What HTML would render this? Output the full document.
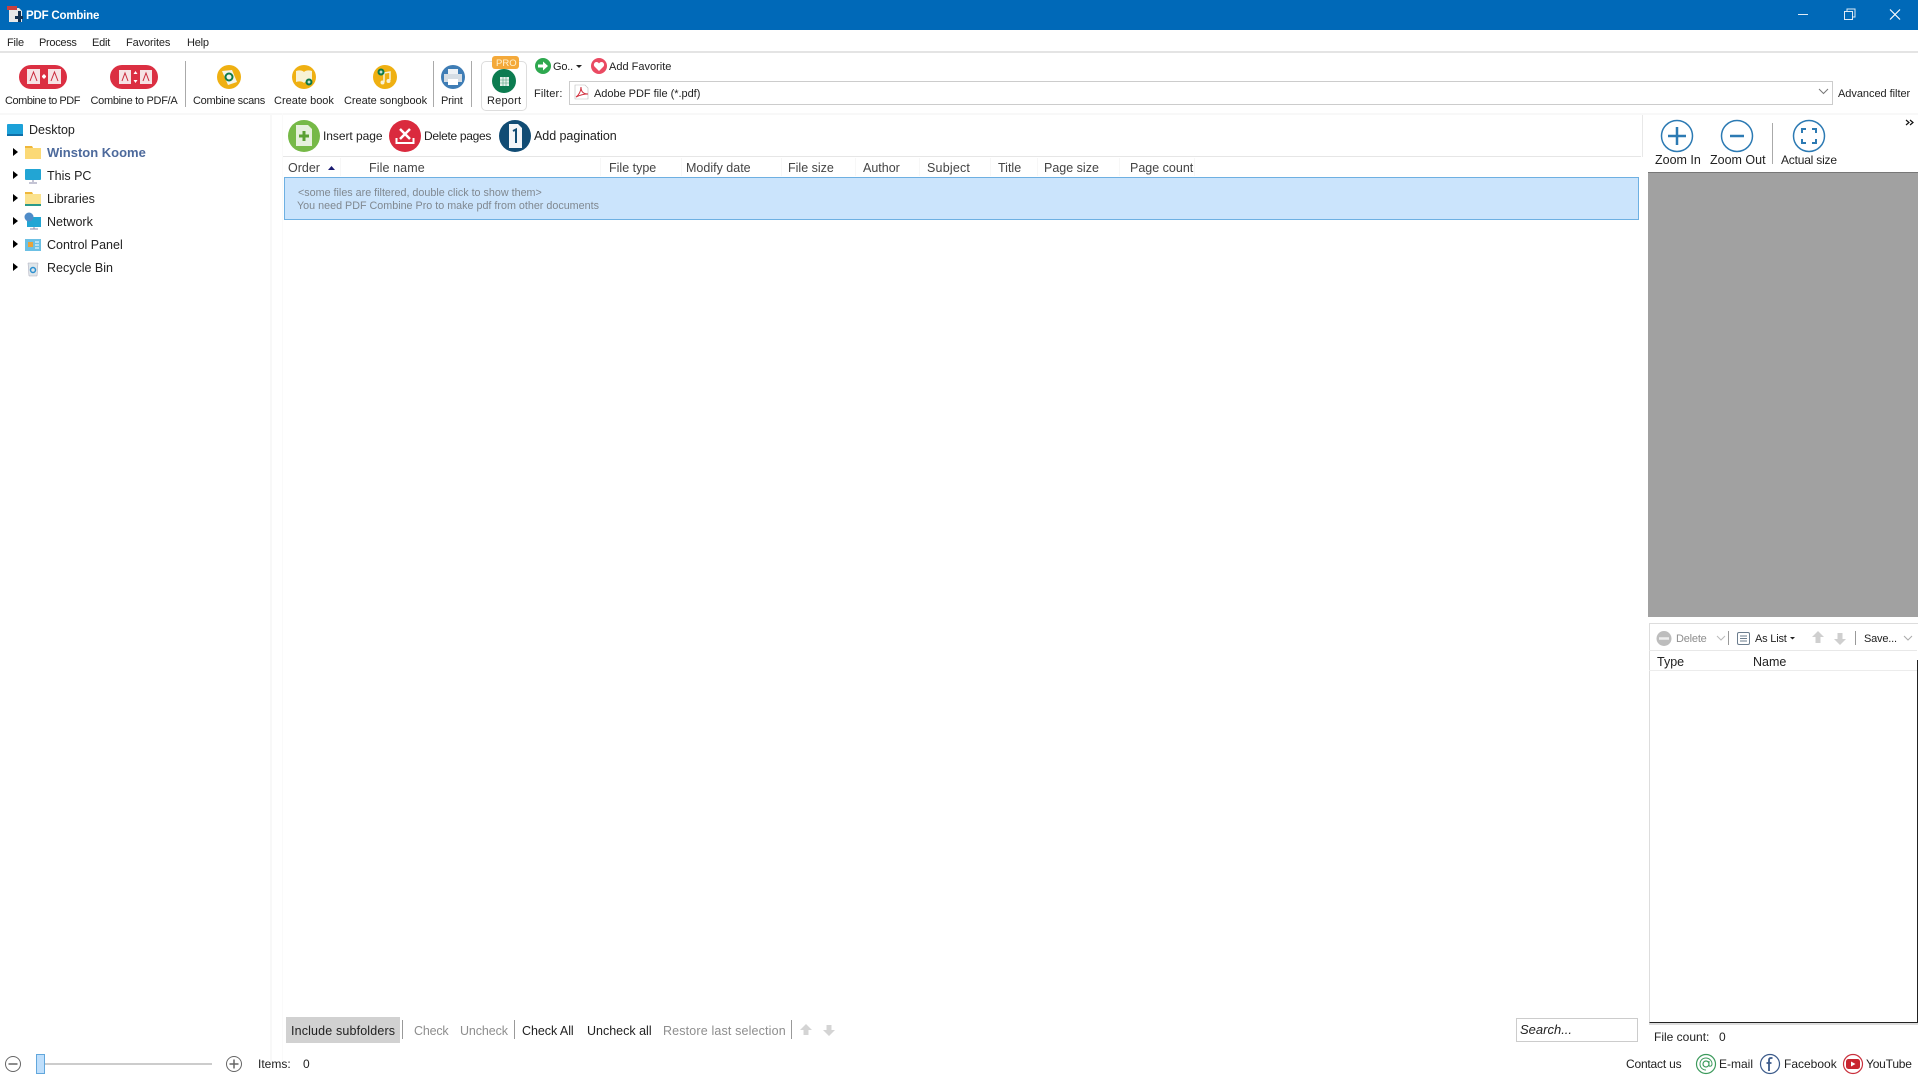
<!DOCTYPE html>
<html><head><meta charset="utf-8"><title>PDF Combine</title>
<style>
html,body{margin:0;padding:0;width:1918px;height:1078px;overflow:hidden;background:#fff}
body{position:relative;font-family:"Liberation Sans",sans-serif;font-size:11px;color:#222}
.t{position:absolute;white-space:nowrap;line-height:14px;letter-spacing:-.2px}
.l{font-size:12.5px;letter-spacing:0}
.m{font-size:12px;letter-spacing:-.1px}
.b{position:absolute}
.g{color:#8e8e8e}
.h{color:#444}
svg{position:absolute;left:0;top:0}
</style></head><body>
<div class="b" style="left:0;top:0;width:1918px;height:30px;background:#0069b8"></div>
<div class="b" style="left:0;top:51px;width:1918px;height:2px;background:#e4e4e4"></div>
<div class="b" style="left:0;top:113px;width:1918px;height:2px;background:#f8f8f8"></div>
<div class="b" style="left:270px;top:113px;width:2px;height:950px;background:#f8f8f8"></div>
<div class="b" style="left:282px;top:113px;width:1px;height:950px;background:#fafafa"></div>
<div class="b" style="left:283px;top:156px;width:1358px;height:1px;background:#e6e6e6"></div>
<div class="b" style="left:284px;top:177px;width:1353px;height:41px;background:#cbe4fc;border:1px solid #6eb0e2"></div>
<div class="b" style="left:1642px;top:115px;width:1px;height:42px;background:#e8e8e8"></div>
<div class="b" style="left:1648px;top:172px;width:270px;height:445px;background:#a1a1a1;border-top:1px solid #777;box-sizing:border-box"></div>
<div class="b" style="left:569px;top:81px;width:1262px;height:22px;border:1px solid #ccc"></div>
<div class="b" style="left:481px;top:61px;width:44px;height:48px;border:1px solid #ddd;border-radius:5px"></div>
<div class="b" style="left:1649px;top:623px;width:268px;height:398px;border-top:1px solid #ddd;border-left:1px solid #ddd;border-right:1px solid #ddd;border-bottom:1px solid #222;box-shadow:0 2px 0 #ddd"></div>
<div class="b" style="left:1917px;top:660px;width:1px;height:362px;background:#222"></div>
<div class="b" style="left:1649px;top:650px;width:268px;height:1px;background:#e8e8e8"></div>
<div class="b" style="left:1649px;top:670px;width:268px;height:1px;background:#ececec"></div>
<div class="b" style="left:286px;top:1017px;width:114px;height:26px;background:#d1d1d1"></div>
<div class="b" style="left:1516px;top:1018px;width:120px;height:22px;border:1px solid #ccc"></div>

<svg width="1918" height="1078" viewBox="0 0 1918 1078" fill="none">
<!-- app icon -->
<path d="M9 8h10l3 3v11H9z" fill="#e8e8e8"/><path d="M7 6h10v4H7z" fill="#c9403f"/><path d="M15 16h3v-5h3v5h2v3h-2v3h-3v-3h-3z" fill="#12304f"/>
<!-- window controls -->
<path d="M1798 14.500h10" stroke="#dfeaf5" stroke-width="1"/>
<path d="M1844.500 11.500h8v8h-8zM1847 11.500v-2.500h8v8h-2.500" stroke="#dfeaf5"/>
<path d="M1890 9.500l10 10M1900 9.500l-10 10" stroke="#fff" stroke-width="1.200"/>
<!-- Combine pills -->
<rect x="19" y="65" width="48" height="24" rx="12" fill="#db2f42"/>
<path d="M27 69h13v15H27zM48 69h13v15H48z" fill="#f6e3e5"/><path d="M30 81l3.500-9 3.500 9M51 81l3.500-9 3.500 9" stroke="#c9283a"/>
<path d="M44 74.500v4M42 76.500h4" stroke="#fff" stroke-width="2"/>
<rect x="110" y="65" width="48" height="24" rx="12" fill="#db2f42"/>
<path d="M119 70h12v14h-12zM140 70h12v14h-12z" fill="#f6e3e5"/><path d="M122 81l3-8 3 8M143 81l3-8 3 8" stroke="#c9283a"/>
<path d="M135.500 71l2 3h-4zM135.500 83l2-3h-4z" fill="#fff"/>
<path d="M185.500 61v46M433.500 61v46M471.500 61v46" stroke="#aaa"/>
<!-- Combine scans -->
<circle cx="229" cy="77" r="12" fill="#efb012"/><path d="M222 71l10-1 5 12-9 3z" fill="#f4f4ea"/><circle cx="229" cy="77" r="3.500" stroke="#0e7a49" stroke-width="2"/>
<!-- book -->
<circle cx="304" cy="77" r="12" fill="#efb012"/><path d="M296 71c3-1 6-1 8 1 2-2 5-2 8-1v11c-3-1-6-1-8 1-2-2-5-2-8-1z" fill="#f8f2d6"/><circle cx="309" cy="82" r="3.500" fill="#0e7a49"/><path d="M307.500 82h3M309 80.500v3" stroke="#fff"/>
<!-- song -->
<circle cx="385" cy="77" r="12" fill="#efb012"/><path d="M384 82v-9l6-1v8" stroke="#f7f2d8" stroke-width="1.500"/><circle cx="382.500" cy="82.500" r="2" fill="#f7f2d8"/><circle cx="388.500" cy="81" r="2" fill="#f7f2d8"/><circle cx="381" cy="72" r="3.500" fill="#0e7a49"/><path d="M379.500 72h3M381 70.500v3" stroke="#fff"/>
<!-- print -->
<circle cx="453" cy="77" r="12" fill="#3f7db5"/><path d="M448 69h10v5h-10z" fill="#eef2f5"/><path d="M444 74h18v8h-18z" fill="#d5dde4"/><path d="M448 79h10v6h-10z" fill="#fff"/>
<!-- report -->
<rect x="492" y="56" width="27" height="13" rx="3" fill="#f4a93a"/>
<circle cx="504" cy="81" r="12" fill="#0c7c50"/><rect x="500" y="77" width="9" height="9" fill="#e6f1ea"/><path d="M500 80h9M500 83h9M503 77v9M506 77v9" stroke="#4f9e7d" stroke-width=".6"/>
<!-- go / fav -->
<circle cx="543" cy="66" r="8" fill="#2ea84f"/><path d="M538 64.500h5v-3l5 4.500-5 4.500v-3h-5z" fill="#fff"/>
<path d="M576 65h6l-3 3z" fill="#222"/>
<circle cx="599" cy="66" r="8" fill="#ea4a62"/><path d="M599 71l-4.500-4.500c-1.500-2 0-4.500 2-4.500 1 0 2 .5 2.500 1.500.5-1 1.500-1.500 2.500-1.500 2 0 3.500 2.500 2 4.500z" fill="#fff"/>
<!-- pdf icon -->
<path d="M575 85h10l3 3v11h-13z" fill="#fff" stroke="#bbb" stroke-width=".6"/><path d="M576 97c3-2 5-6 5-10 0 4 2 7 7 7-4 0-8 1-12 3z" stroke="#d2303f"/>
<path d="M1819 89l4.500 4.500 4.500-4.500" stroke="#777"/>
<!-- tree -->
<rect x="7" y="124" width="16" height="12" rx="1" fill="#1ca1d8"/><path d="M7 134h16v2H7z" fill="#0f6fa8"/>
<path d="M13 148v8l5-4zM13 171v8l5-4zM13 194v8l5-4zM13 217v8l5-4zM13 240v8l5-4zM13 263v8l5-4z" fill="#000"/>
<path d="M25 148v-2h7l1 2h8v11H25z" fill="#fbd976"/><path d="M25 146h7l1 2h-8z" fill="#efb73b"/>
<rect x="25" y="169" width="16" height="11" rx="1" fill="#22a5d4"/><path d="M33 180v2M29 183h8" stroke="#88a"/>
<path d="M25 194v-2h7l1 2h8v11H25z" fill="#fbe28e"/><path d="M25 192h7l1 2h-8z" fill="#efb73b"/><path d="M25 204h16v2H25z" fill="#2b9a8a"/>
<rect x="27" y="217" width="14" height="10" fill="#22a5d4"/><circle cx="29" cy="217" r="4.500" fill="#4f8cc8"/><path d="M34 227v2M30 229h8" stroke="#88a"/>
<rect x="25" y="239" width="16" height="12" fill="#6cc0e4"/><rect x="28" y="242" width="5" height="5" fill="#e8a33a"/><path d="M35 242h4M35 245h4M35 248h4" stroke="#fff"/>
<path d="M28 263h10l-1 13h-8z" fill="#dfe6ea" stroke="#aab"  stroke-width=".5"/><circle cx="33" cy="270" r="2.500" stroke="#2a8fd0" stroke-width="1.500"/>
<!-- main toolbar -->
<circle cx="304" cy="136" r="16" fill="#76b947"/><path d="M296 125h12l4 4v17h-16z" fill="#e6f0dc"/><path d="M304 131v10M299 136h10" stroke="#5aa032" stroke-width="3"/>
<circle cx="405" cy="136" r="16" fill="#da2a3e"/><path d="M400 129l10 10M410 129l-10 10" stroke="#fff" stroke-width="2.500"/><path d="M396.500 138v5h17v-5" stroke="#fff" stroke-width="2"/>
<circle cx="515" cy="136" r="16" fill="#114c74"/><path d="M509 124h9l4 4v20h-13z" fill="#f4f6f8"/><path d="M513 131l3-1.500V143" stroke="#114c74" stroke-width="2"/>
<path d="M328 170l3.500-4 3.500 4z" fill="#1a1a70"/>
<path d="M340.500 158v18M600.500 158v18M681.500 158v18M781.500 158v18M855.500 158v18M919.500 158v18M990.500 158v18M1037.500 158v18M1119.500 158v18M1194.500 158v18" stroke="#f7f7f7"/>
<!-- zoom -->
<circle cx="1677" cy="136" r="15.500" stroke="#2c7ab3" stroke-width="1.500"/><path d="M1668 136h18M1677 127v18" stroke="#2c7ab3" stroke-width="2.500"/>
<circle cx="1737" cy="136" r="15.500" stroke="#2c7ab3" stroke-width="1.500"/><path d="M1730 136h14" stroke="#2c7ab3" stroke-width="2.500"/>
<path d="M1772.500 123v41" stroke="#aaa"/>
<circle cx="1809" cy="136" r="15.500" stroke="#2c7ab3" stroke-width="1.500"/><path d="M1802 133v-4h4M1812 129h4v4M1816 139v4h-4M1806 143h-4v-4" stroke="#2c7ab3" stroke-width="2"/>
<path d="M1906 120l3 2.500-3 2.500M1910 120l3 2.500-3 2.500" stroke="#111" stroke-width="1.200"/>
<!-- list toolbar -->
<circle cx="1664" cy="638.500" r="7.500" fill="#bdbdbd"/><path d="M1659 638.500h10" stroke="#eee" stroke-width="2.500"/>
<path d="M1717 636l4 4 4-4" stroke="#bbb"/><path d="M1728.500 631v14M1855.500 631v14" stroke="#999"/>
<rect x="1737.500" y="632.500" width="12" height="12" rx="1.500" stroke="#6b7d8e"/><path d="M1740 636h7M1740 638.500h7M1740 641h7" stroke="#6b7d8e"/>
<path d="M1790 637h5l-2.500 2.500z" fill="#222"/>
<path d="M1818 631l6 6h-3.500v6h-5v-6H1812z" fill="#cfcfcf"/><path d="M1840 645l6-6h-3.500v-6h-5v6H1834z" fill="#cfcfcf"/>
<path d="M1904 636l4 4 4-4" stroke="#aaa"/>
<!-- bottom row -->
<path d="M402.500 1020v19M514.500 1020v19M791.500 1020v19" stroke="#999"/>
<path d="M806 1024l6 6h-3.500v5h-5v-5H800z" fill="#d4d4d4"/><path d="M829 1036l6-6h-3.500v-5h-5v5H823z" fill="#d4d4d4"/>
<!-- slider -->
<circle cx="13" cy="1064" r="7.500" stroke="#666"/><path d="M8.500 1064h9" stroke="#666" stroke-width="1.500"/>
<rect x="45" y="1063" width="167" height="2" fill="#ccc"/><rect x="36.500" y="1054.500" width="8" height="19" fill="#bfdffc" stroke="#62a7dc"/>
<circle cx="234" cy="1064" r="7.500" stroke="#666"/><path d="M229.500 1064h9M234 1059.500v9" stroke="#666" stroke-width="1.500"/>
<!-- social -->
<circle cx="1706" cy="1064" r="9.500" stroke="#3c9a5c" stroke-width="1.200"/><circle cx="1706" cy="1064" r="3" stroke="#3c9a5c" stroke-width="1.200"/><path d="M1709 1061v4c0 2 3 1.500 3-1 0-3.500-3-6-6-6-3.500 0-6 2.500-6 6s2.500 6 6 6" stroke="#3c9a5c"/>
<circle cx="1770" cy="1064" r="9.500" stroke="#3b5a8a" stroke-width="1.200"/><path d="M1772.500 1058h-1.500c-1.500 0-2 1-2 2v11M1766.500 1063h5" stroke="#3b5a8a" stroke-width="1.800"/>
<circle cx="1853" cy="1064" r="9.500" stroke="#c9303c" stroke-width="1.200"/><rect x="1846" y="1059" width="14" height="10" rx="2.500" fill="#c9252f"/><path d="M1851 1061.500v5l4.500-2.500z" fill="#fff"/>
</svg>

<div class="t" style="left:26px;top:9px;color:#fff;font-weight:bold;font-size:11.500px">PDF Combine</div>
<div class="t" style="left:7px;top:36px">File</div>
<div class="t" style="left:39px;top:36px;letter-spacing:-.3px">Process</div>
<div class="t" style="left:92px;top:36px">Edit</div>
<div class="t" style="left:126px;top:36px;letter-spacing:-.1px">Favorites</div>
<div class="t" style="left:187px;top:36px">Help</div>
<div class="t" style="left:5px;top:94px;letter-spacing:-.45px">Combine to PDF</div>
<div class="t" style="left:90.500px;top:94px;letter-spacing:-.3px">Combine to PDF/A</div>
<div class="t" style="left:193px;top:94px;letter-spacing:-.3px">Combine scans</div>
<div class="t" style="left:274px;top:94px;letter-spacing:0">Create book</div>
<div class="t" style="left:344px;top:94px;letter-spacing:-.05px">Create songbook</div>
<div class="t" style="left:441px;top:94px">Print</div>
<div class="t" style="left:487px;top:94px;letter-spacing:.2px">Report</div>
<div class="t" style="left:496px;top:57px;color:#fff3d0;font-size:9.500px;letter-spacing:0">PRO</div>
<div class="t" style="left:553px;top:60px">Go..</div>
<div class="t" style="left:609px;top:60px;letter-spacing:0">Add Favorite</div>
<div class="t" style="left:534px;top:87px;letter-spacing:.15px">Filter:</div>
<div class="t" style="left:594px;top:87px;letter-spacing:-.03px">Adobe PDF file (*.pdf)</div>
<div class="t" style="left:1838px;top:87px;letter-spacing:-.04px">Advanced filter</div>
<div class="t l" style="left:29px;top:123px">Desktop</div>
<div class="t" style="left:47px;top:146px;font-weight:bold;color:#4d6a9c;font-size:13px;letter-spacing:0">Winston Koome</div>
<div class="t l" style="left:47px;top:169px">This PC</div>
<div class="t l" style="left:47px;top:192px">Libraries</div>
<div class="t l" style="left:47px;top:215px">Network</div>
<div class="t l" style="left:47px;top:238px">Control Panel</div>
<div class="t l" style="left:47px;top:261px">Recycle Bin</div>
<div class="t m" style="left:323px;top:129px;letter-spacing:-.05px">Insert page</div>
<div class="t m" style="left:424px;top:129px;letter-spacing:-.3px">Delete pages</div>
<div class="t l" style="left:534px;top:129px;letter-spacing:-.05px">Add pagination</div>
<div class="t h l" style="left:288px;top:161px">Order</div>
<div class="t h l" style="left:369px;top:161px;letter-spacing:.1px">File name</div>
<div class="t h l" style="left:609px;top:161px">File type</div>
<div class="t h l" style="left:686px;top:161px">Modify date</div>
<div class="t h l" style="left:788px;top:161px">File size</div>
<div class="t h l" style="left:863px;top:161px">Author</div>
<div class="t h l" style="left:927px;top:161px;letter-spacing:.2px">Subject</div>
<div class="t h l" style="left:998px;top:161px">Title</div>
<div class="t h l" style="left:1044px;top:161px">Page size</div>
<div class="t h l" style="left:1130px;top:161px">Page count</div>
<div class="t" style="left:298px;top:186px;font-size:10.750px;letter-spacing:0;color:#808890">&lt;some files are filtered, double click to show them&gt;</div>
<div class="t" style="left:297px;top:199px;font-size:10.750px;letter-spacing:0;color:#808890">You need PDF Combine Pro to make pdf from other documents</div>
<div class="t l" style="left:1655px;top:153px">Zoom In</div>
<div class="t l" style="left:1710px;top:153px">Zoom Out</div>
<div class="t m" style="left:1781px;top:153px;letter-spacing:-.2px">Actual size</div>
<div class="t g" style="left:1676px;top:632px">Delete</div>
<div class="t" style="left:1755px;top:632px">As List</div>
<div class="t" style="left:1864px;top:632px">Save...</div>
<div class="t l" style="left:1657px;top:655px">Type</div>
<div class="t l" style="left:1753px;top:655px">Name</div>
<div class="t l" style="left:291px;top:1024px;letter-spacing:.15px">Include subfolders</div>
<div class="t g l" style="left:414px;top:1024px;letter-spacing:-.2px">Check</div>
<div class="t g l" style="left:460px;top:1024px;letter-spacing:-.1px">Uncheck</div>
<div class="t l" style="left:522px;top:1024px;letter-spacing:-.05px">Check All</div>
<div class="t l" style="left:587px;top:1024px">Uncheck all</div>
<div class="t g l" style="left:663px;top:1024px;letter-spacing:.15px">Restore last selection</div>
<div class="t" style="left:1520px;top:1023px;font-style:italic;font-size:13px;letter-spacing:0">Search...</div>
<div class="t m" style="left:1654px;top:1030px;letter-spacing:0">File count:</div>
<div class="t m" style="left:1719px;top:1030px">0</div>
<div class="t m" style="left:258px;top:1057px;letter-spacing:0">Items:</div>
<div class="t m" style="left:303px;top:1057px">0</div>
<div class="t m" style="left:1626px;top:1057px;letter-spacing:-.2px">Contact us</div>
<div class="t m" style="left:1719px;top:1057px;letter-spacing:0">E-mail</div>
<div class="t m" style="left:1784px;top:1057px;letter-spacing:0">Facebook</div>
<div class="t m" style="left:1866px;top:1057px;letter-spacing:-.2px">YouTube</div>
</body></html>
